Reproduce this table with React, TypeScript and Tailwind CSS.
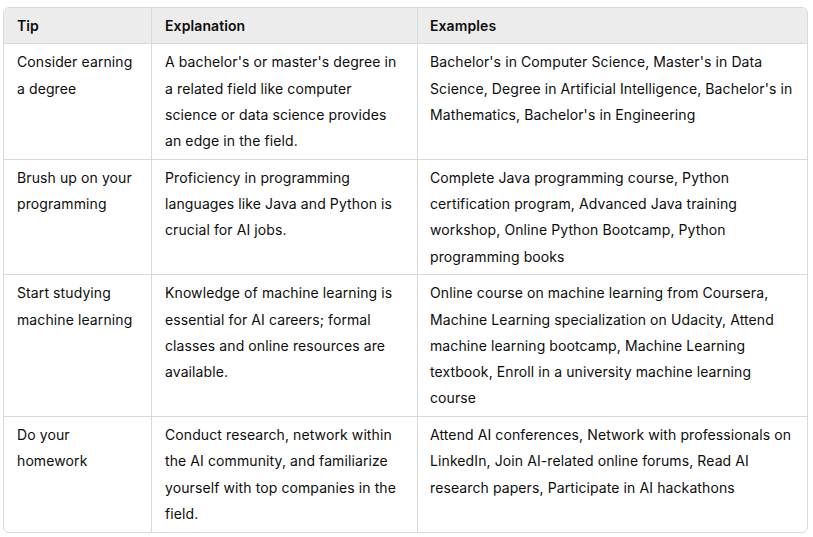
import React from "react";

const rows: [string, string, string][] = [
  [
    "Consider earning a degree",
    "A bachelor's or master's degree in a related field like computer science or data science provides an edge in the field.",
    "Bachelor's in Computer Science, Master's in Data Science, Degree in Artificial Intelligence, Bachelor's in Mathematics, Bachelor's in Engineering",
  ],
  [
    "Brush up on your programming",
    "Proficiency in programming languages like Java and Python is crucial for AI jobs.",
    "Complete Java programming course, Python certification program, Advanced Java training workshop, Online Python Bootcamp, Python programming books",
  ],
  [
    "Start studying machine learning",
    "Knowledge of machine learning is essential for AI careers; formal classes and online resources are available.",
    "Online course on machine learning from Coursera, Machine Learning specialization on Udacity, Attend machine learning bootcamp, Machine Learning textbook, Enroll in a university machine learning course",
  ],
  [
    "Do your homework",
    "Conduct research, network within the AI community, and familiarize yourself with top companies in the field.",
    "Attend AI conferences, Network with professionals on LinkedIn, Join AI-related online forums, Read AI research papers, Participate in AI hackathons",
  ],
];

export default function App() {
  return (
    <div className="w-[813px] h-[537px] bg-white pt-[7px] pl-[3px]" style={{ fontFamily: 'Inter, "Liberation Sans", Arial, sans-serif' }}>
      <div className="w-[805px] border border-[#d9d9d9] rounded-md overflow-hidden text-[14px] leading-[26.25px] tracking-[0.1px] text-[#0d0d0d]">
        <div className="grid grid-cols-[148px_266px_1fr] bg-[#ececec] font-semibold">
          <div className="px-[13px] py-[4.5px] border-r border-[#d9d9d9]">Tip</div>
          <div className="px-[13px] py-[4.5px] border-r border-[#d9d9d9]">Explanation</div>
          <div className="px-[12px] py-[4.5px]">Examples</div>
        </div>
        {rows.map((r, i) => (
          <div key={i} className="grid grid-cols-[148px_266px_1fr] border-t border-[#d9d9d9]">
            <div className="px-[13px] pt-[5px] pb-[4.5px] border-r border-[#d9d9d9]">{r[0]}</div>
            <div className="px-[13px] pt-[5px] pb-[4.5px] border-r border-[#d9d9d9]">{r[1]}</div>
            <div className="px-[12px] pt-[5px] pb-[4.5px]">{r[2]}</div>
          </div>
        ))}
      </div>
    </div>
  );
}
